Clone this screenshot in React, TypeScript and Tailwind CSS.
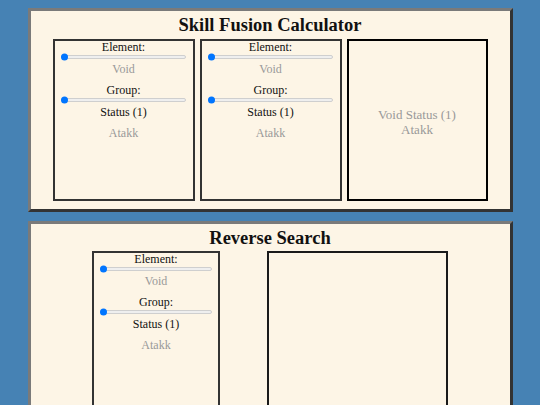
import type { ReactNode } from "react";

const serif = { fontFamily: '"Liberation Serif", "Times New Roman", serif' };

function Slider() {
  return (
    <div className="relative mx-auto flex h-[6px] w-[90%] items-center" role="slider" aria-valuenow={0}>
      <div className="h-[4px] w-full rounded-full border border-[#cfcfcf] bg-[#efefef]" />
      <div className="absolute left-0 top-1/2 size-[7px] -translate-y-1/2 rounded-full bg-[#0075ff]" />
    </div>
  );
}

function Picker({ width }: { width: string }) {
  return (
    <div className={`${width} h-[162px] border-2 border-[#333] text-center text-[12px] leading-[14px]`}>
      <div className="mt-[-1px] text-[#111]">Element:</div>
      <Slider />
      <div className="mt-[2px] text-[#999]">Void</div>
      <div className="mt-[7px] text-[#111]">Group:</div>
      <Slider />
      <div className="mt-[2px] text-[#111]">Status (1)</div>
      <div className="mt-[7px] text-[#999]">Atakk</div>
    </div>
  );
}

function Panel({ title, children, className = "" }: { title: string; children: ReactNode; className?: string }) {
  return (
    <section
      className={`mx-auto w-[485px] border-[3px] border-t-[#7a7a7a] border-l-[#7a7a7a] border-r-[#333] border-b-[#333] bg-[#fdf5e6] pb-[8px] ${className}`}
    >
      <h2 className="pt-[4px] text-center text-[18.5px] font-bold leading-[21px] text-[#111]">{title}</h2>
      {children}
    </section>
  );
}

export default function App() {
  return (
    <div className="min-h-screen overflow-hidden bg-[#4682b4] pt-[8px]" style={serif}>
      <Panel title="Skill Fusion Calculator">
        <div className="mt-[3px] flex justify-center gap-[5px]">
          <Picker width="w-[142px]" />
          <Picker width="w-[142px]" />
          <div className="flex h-[162px] w-[141px] flex-col items-center justify-center border-2 border-black pt-[4px] text-center text-[13px] leading-[15px] text-[#999]">
            <div>Void Status (1)</div>
            <div>Atakk</div>
          </div>
        </div>
      </Panel>

      <Panel title="Reverse Search" className="mt-[9px]">
        <div className="mt-[2px] flex justify-center gap-[47px]">
          <Picker width="w-[128px]" />
          <div className="h-[162px] w-[181px] border-2 border-[#1a1a1a]" />
        </div>
      </Panel>
    </div>
  );
}
